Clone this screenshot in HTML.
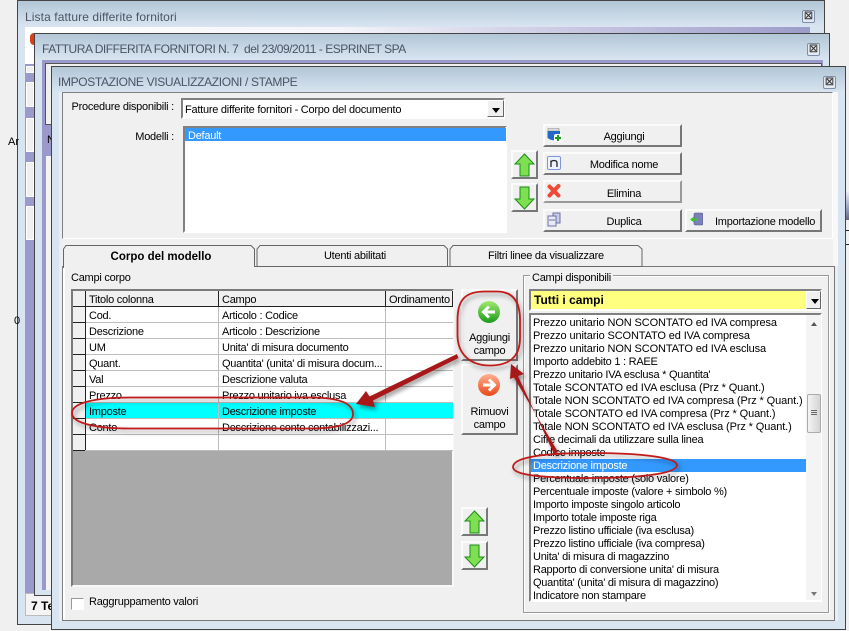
<!DOCTYPE html>
<html><head><meta charset="utf-8">
<style>
html,body{margin:0;padding:0;background:#f0f0f0;width:849px;height:631px;overflow:hidden}
body{position:relative;font:11px/14px "Liberation Sans",sans-serif;color:#000;letter-spacing:-.25px}
div,span,svg{position:absolute;box-sizing:border-box}
.t{white-space:nowrap;line-height:14px;height:14px;margin-top:1px}
.r{margin-top:2px}
.u{letter-spacing:-.12px}
.win{border:1px solid #444;background:#d8e4f0}
.tb{left:0;right:0;top:0;height:26px;background:linear-gradient(#b2c6d6,#d9e5f1)}
.ti{font-size:12px;color:#4a5464;letter-spacing:.1px;margin-top:0}
.x{width:13px;height:13px;border:1px solid #7d8ea8;background:#e4eaf2;border-radius:2px;font:bold 10px/11px "Liberation Sans",sans-serif;text-align:center;color:#333;letter-spacing:0}
.b{background:#f0f0f0;border:2px solid;border-color:#fbfbfb #777 #777 #fbfbfb}
.s{border:2px solid;border-color:#808080 #fff #fff #808080;background:#fff}
.c{text-align:center}
.dd{background:#f0f0f0;border:1px solid;border-color:#fff #666 #666 #fff}
.dd:after{content:"";position:absolute;left:4px;top:7px;border:4px solid transparent;border-top:5px solid #000;border-bottom:0}
.l{background:#bdbdbd}
.d{background:#222}
.k{left:26px;width:8px;background:#f0f0f0;border:1px solid #fff}
</style></head><body>

<!-- window 1 -->
<div class="win" style="left:17px;top:0;width:808px;height:625px">
 <div class="tb"></div>
 <div style="left:7px;top:26px;width:785px;height:7px;background:linear-gradient(90deg,#fff,#f4f4fa 40%,#9c9cca)"></div>
 <div style="left:7px;top:33px;width:10px;height:30px;background:#fff"></div>
 <div style="left:7px;top:63px;width:10px;height:530px;background:#9999cb"></div>
</div>
<div class="k" style="top:66px;height:7px"></div>
<div class="k" style="top:82px;height:25px"></div>
<div class="k" style="top:118px;height:34px"></div>
<div class="k" style="top:162px;height:35px"></div>
<div class="k" style="top:206px;height:34px"></div>
<div class="t ti" style="left:25px;top:10px">Lista fatture differite fornitori</div>
<div class="x" style="left:802px;top:10px">&#9746;</div>
<div style="left:30px;top:33px;width:8px;height:12px;background:#d84018;border-radius:4px"></div>
<div class="t" style="left:8px;top:134px;letter-spacing:0">Ar</div>
<div class="t" style="left:14px;top:313px">0</div>
<div style="left:25px;top:593px;width:30px;height:23px;background:#f4f4f4;border:1px solid #bbb"></div>
<div class="t" style="left:31px;top:598px;font-weight:bold;font-size:12px;letter-spacing:0">7 Te</div>

<!-- window 2 -->
<div class="win" style="left:34px;top:33px;width:796px;height:563px">
 <div class="tb"></div>
 <div style="left:7px;top:26px;width:781px;height:530px;background:#9999cb"></div>
 <div style="left:10px;top:29px;width:777px;height:62px;background:#f0f0f0;border:1px solid #555"></div>
 <div style="left:11px;top:122px;width:6px;height:434px;background:#f4f4f4"></div>
 <div style="left:8px;top:91px;width:9px;height:30px;background:#9999cb"></div>
</div>
<div class="t" style="left:47px;top:132px">N</div>
<div class="t ti" style="left:42px;top:42px;letter-spacing:-.47px">FATTURA DIFFERITA FORNITORI N. 7&nbsp; del 23/09/2011 - ESPRINET SPA</div>
<div class="x" style="left:807px;top:43px">&#9746;</div>

<!-- right fragments -->
<div style="left:846px;top:190px;width:3px;height:30px;background:linear-gradient(#f4f4fa,#8a92b8 70%,#667)"></div>
<div style="left:846px;top:230px;width:3px;height:1px;background:#222"></div>
<div style="left:846px;top:244px;width:3px;height:1px;background:#222"></div>

<!-- window 3 -->
<div class="win" style="left:51px;top:66px;width:795px;height:564px">
 <div class="tb"></div>
</div>
<div class="t ti" style="left:58px;top:75px;letter-spacing:-.35px">IMPOSTAZIONE VISUALIZZAZIONI / STAMPE</div>
<div class="x" style="left:823px;top:76px">&#9746;</div>
<div style="left:59px;top:92px;width:779px;height:529px;background:#e8eef7"></div>
<div style="left:62px;top:92px;width:773px;height:528px;background:#f0f0f0"></div>
<div style="left:833px;top:92px;width:5px;height:174px;background:#f8f8fb"></div>

<!-- top group -->
<div style="left:62px;top:92px;width:771px;height:147px;border:1px solid;border-color:#808080 #fff #fff #808080"></div>
<div class="t" style="right:675px;top:99px">Procedure disponibili :</div>
<div class="s" style="left:181px;top:98px;width:324px;height:21px"></div>
<div class="t" style="left:185px;top:102px">Fatture differite fornitori - Corpo del documento</div>
<div class="dd" style="left:487px;top:100px;width:17px;height:17px"></div>
<div class="t" style="right:675px;top:129px">Modelli :</div>
<div class="s" style="left:183px;top:126px;width:324px;height:107px"></div>
<div style="left:185px;top:128px;width:321px;height:13px;background:#3399ff"></div>
<div class="t" style="left:188px;top:128px;color:#fff">Default</div>

<div class="b" style="left:511px;top:150px;width:27px;height:29px"></div>
<div class="b" style="left:511px;top:183px;width:27px;height:29px"></div>
<svg style="left:514px;top:153px" width="21" height="24" viewBox="0 0 21 24"><path d="M10.500 1L20 11H15V23H6V11H1Z" fill="#7ee050" stroke="#1c8a1c"/></svg>
<svg style="left:514px;top:186px" width="21" height="24" viewBox="0 0 21 24"><path d="M10.500 23L20 13H15V1H6V13H1Z" fill="#7ee050" stroke="#1c8a1c"/></svg>

<div class="b" style="left:543px;top:124px;width:139px;height:23px"></div>
<div class="t c" style="left:543px;top:129px;width:162px">Aggiungi</div>
<div class="b" style="left:543px;top:152px;width:139px;height:23px"></div>
<div class="t c" style="left:543px;top:157px;width:162px">Modifica nome</div>
<div class="b" style="left:543px;top:180px;width:139px;height:23px;border-bottom-color:#999;border-right-color:#999"></div>
<div class="t c" style="left:543px;top:186px;width:162px">Elimina</div>
<div class="b" style="left:543px;top:209px;width:139px;height:23px"></div>
<div class="t c" style="left:543px;top:214px;width:162px">Duplica</div>
<div class="b" style="left:685px;top:209px;width:137px;height:23px"></div>
<div class="t" style="left:715px;top:214px">Importazione modello</div>

<svg style="left:547px;top:127px" width="15" height="15" viewBox="0 0 15 15"><path d="M1 1.500H12V4H1Z" fill="#ddd" stroke="#888" stroke-width=".6"/><path d="M.5 4H13V11Q7 15.500 .5 11Z" fill="#2468c8"/><rect x="7" y="7" width="8" height="8" fill="#fff" rx="2"/><path d="M11 8V14M8 11H14" stroke="#18a018" stroke-width="2"/></svg>
<svg style="left:547px;top:156px" width="14" height="14" viewBox="0 0 14 14"><rect x=".5" y=".5" width="13" height="13" rx="1.500" fill="#eef2fc" stroke="#7f96d8"/><path d="M4 11V4.500M4 6Q5 4.500 7 4.500Q10 4.500 10 7V11" fill="none" stroke="#222" stroke-width="1.300"/></svg>
<svg style="left:547px;top:184px" width="14" height="14" viewBox="0 0 14 14"><path d="M2.500 2.500L11.500 11.500M11.500 2L2.500 11.500" stroke="#ee4a38" stroke-width="4" stroke-linecap="round"/></svg>
<svg style="left:547px;top:212px" width="14" height="15" viewBox="0 0 14 15"><path d="M6 1H13V11H6Z" fill="#c8cce4" stroke="#6c70a8"/><path d="M1 4H9V14H1Z" fill="#e8eaf4" stroke="#6c70a8"/><path d="M2 8H8" stroke="#6c70a8"/></svg>
<svg style="left:690px;top:212px" width="13" height="14" viewBox="0 0 13 14"><rect x="4" y="1" width="9" height="12" rx="1.500" fill="#7c80b8" stroke="#50548c" stroke-width=".6"/><path d="M0 7.500L4 4.500V6.500H8V8.500H4V10.500Z" fill="#3cc820"/></svg>

<!-- tabs -->
<div style="left:62px;top:266px;width:773px;height:355px;border:1px solid;border-color:#777;border-left-color:#808080;box-shadow:inset 2px 0 0 #fff;background:#f0f0f0"></div>
<svg style="left:60px;top:243px" width="590" height="26" viewBox="0 0 590 26">
 <path d="M3.500 25V6L6 2.500H191L194.500 6V24M197 23.500V6L200 2.500H384L387.500 6V23.500M390 23.500V6L393 2.500H578L582 6V23.500" fill="#f0f0f0" stroke="#666"/>
 <path d="M195 23.500H582" stroke="#666"/>
</svg>
<div class="t c" style="left:63px;top:249px;width:196px;font-weight:bold;font-size:11.5px;letter-spacing:0">Corpo del modello</div>
<div class="t c" style="left:257px;top:248px;width:196px">Utenti abilitati</div>
<div class="t c" style="left:450px;top:248px;width:192px">Filtri linee da visualizzare</div>

<!-- table -->
<div class="t" style="left:71px;top:270px">Campi corpo</div>
<div style="left:71px;top:289px;width:383px;height:298px;background:#a9a9a9;border:2px solid;border-color:#7a7a7a #f8f8f8 #f8f8f8 #7a7a7a"></div>
<div style="left:73px;top:291px;width:380px;height:16px;background:#f0f0f0"></div>
<div style="left:73px;top:306px;width:380px;height:145px;background:#fff"></div>
<div style="left:73px;top:307px;width:12px;height:143px;background:#f0f0f0"></div>
<div style="left:85px;top:403px;width:368px;height:15px;background:#00ffff"></div>
<div class="d" style="left:73px;top:306px;width:380px;height:1px"></div>
<div class="l" style="left:85px;top:322px;width:368px;height:1px"></div>
<div class="l" style="left:85px;top:338px;width:368px;height:1px"></div>
<div class="l" style="left:85px;top:354px;width:368px;height:1px"></div>
<div class="l" style="left:85px;top:370px;width:368px;height:1px"></div>
<div class="l" style="left:85px;top:386px;width:368px;height:1px"></div>
<div class="l" style="left:85px;top:402px;width:368px;height:1px"></div>
<div class="l" style="left:85px;top:418px;width:368px;height:1px"></div>
<div class="l" style="left:85px;top:434px;width:368px;height:1px"></div>
<div class="d" style="left:73px;top:322px;width:12px;height:1px"></div>
<div class="d" style="left:73px;top:338px;width:12px;height:1px"></div>
<div class="d" style="left:73px;top:354px;width:12px;height:1px"></div>
<div class="d" style="left:73px;top:370px;width:12px;height:1px"></div>
<div class="d" style="left:73px;top:386px;width:12px;height:1px"></div>
<div class="d" style="left:73px;top:402px;width:12px;height:1px"></div>
<div class="d" style="left:73px;top:418px;width:12px;height:1px"></div>
<div class="d" style="left:73px;top:434px;width:12px;height:1px"></div>
<div class="d" style="left:73px;top:450px;width:12px;height:1px"></div>
<div class="d" style="left:85px;top:291px;width:1px;height:160px"></div>
<div class="d" style="left:218px;top:291px;width:1px;height:16px"></div>
<div class="l" style="left:218px;top:307px;width:1px;height:144px"></div>
<div class="d" style="left:385px;top:291px;width:1px;height:16px"></div>
<div class="l" style="left:385px;top:307px;width:1px;height:144px"></div>
<div class="d" style="left:452px;top:291px;width:1px;height:16px"></div>
<div class="l" style="left:85px;top:450px;width:368px;height:1px"></div>

<div class="t r" style="left:89px;top:291px">Titolo colonna</div>
<div class="t r" style="left:222px;top:291px">Campo</div>
<div class="t r" style="left:389px;top:291px">Ordinamento</div>
<div class="t r" style="left:89px;top:307px">Cod.</div><div class="t r" style="left:222px;top:307px">Articolo : Codice</div>
<div class="t r" style="left:89px;top:323px">Descrizione</div><div class="t r" style="left:222px;top:323px">Articolo : Descrizione</div>
<div class="t r" style="left:89px;top:339px">UM</div><div class="t r" style="left:222px;top:339px">Unita' di misura documento</div>
<div class="t r" style="left:89px;top:355px">Quant.</div><div class="t r" style="left:222px;top:355px">Quantita' (unita' di misura docum...</div>
<div class="t r" style="left:89px;top:371px">Val</div><div class="t r" style="left:222px;top:371px">Descrizione valuta</div>
<div class="t r" style="left:89px;top:387px">Prezzo</div><div class="t r" style="left:222px;top:387px">Prezzo unitario iva esclusa</div>
<div class="t r" style="left:89px;top:403px">Imposte</div><div class="t r" style="left:222px;top:403px">Descrizione imposte</div>
<div class="t r" style="left:89px;top:419px">Conto</div><div class="t r" style="left:222px;top:419px">Descrizione conto contabilizzazi...</div>

<div class="s" style="left:71px;top:598px;width:13px;height:12px;border-width:1px;border-color:#999 #fff #fff #999"></div>
<div class="t" style="left:89px;top:594px">Raggruppamento valori</div>

<!-- middle buttons -->
<div class="b" style="left:461px;top:289px;width:57px;height:72px"></div>
<div class="b" style="left:461px;top:364px;width:57px;height:71px"></div>
<svg style="left:477px;top:300px" width="24" height="24" viewBox="0 0 24 24"><defs><linearGradient id="g" x1="0" y1="0" x2="0" y2="1"><stop offset="0" stop-color="#a0ea70"/><stop offset="1" stop-color="#1c9a1c"/></linearGradient><linearGradient id="o" x1="0" y1="0" x2="0" y2="1"><stop offset="0" stop-color="#ffb090"/><stop offset="1" stop-color="#e84818"/></linearGradient></defs><circle cx="12" cy="12" r="11" fill="url(#g)"/><path d="M18 12H7M12 6.500L6.500 12L12 17.500" fill="none" stroke="#fff" stroke-width="3"/></svg>
<svg style="left:477px;top:373px" width="24" height="24" viewBox="0 0 24 24"><circle cx="12" cy="12" r="11" fill="url(#o)"/><path d="M6 12H17M12 6.500L17.500 12L12 17.500" fill="none" stroke="#fff" stroke-width="3"/></svg>
<div class="t c" style="left:461px;top:330px;width:57px">Aggiungi</div>
<div class="t c" style="left:461px;top:343px;width:57px">campo</div>
<div class="t c" style="left:461px;top:404px;width:57px">Rimuovi</div>
<div class="t c" style="left:461px;top:417px;width:57px">campo</div>

<div class="b" style="left:461px;top:507px;width:27px;height:29px"></div>
<div class="b" style="left:461px;top:541px;width:27px;height:29px"></div>
<svg style="left:464px;top:510px" width="21" height="24" viewBox="0 0 21 24"><path d="M10.500 1L20 11H15V23H6V11H1Z" fill="#7ee050" stroke="#1c8a1c"/></svg>
<svg style="left:464px;top:544px" width="21" height="24" viewBox="0 0 21 24"><path d="M10.500 23L20 13H15V1H6V13H1Z" fill="#7ee050" stroke="#1c8a1c"/></svg>

<!-- right group -->
<div style="left:523px;top:275px;width:306px;height:338px;border:1px solid;border-color:#999;box-shadow:inset 1px 1px 0 #fff,1px 1px 0 #fff"></div>
<div class="t" style="left:530px;top:270px;background:#f0f0f0;padding:0 2px">Campi disponibili</div>
<div class="s" style="left:529px;top:289px;width:293px;height:22px;background:#ffff80"></div>
<div class="t" style="left:534px;top:292px;font-weight:bold;font-size:12px;letter-spacing:0">Tutti i campi</div>
<div class="dd" style="left:806px;top:291px;width:15px;height:18px"></div>
<div class="s" style="left:529px;top:313px;width:293px;height:289px"></div>
<div style="left:531px;top:459px;width:275px;height:13px;background:#3399ff"></div>
<div style="left:806px;top:315px;width:15px;height:285px;background:#f4f4f4"></div>
<div style="left:807px;top:394px;width:14px;height:39px;background:linear-gradient(90deg,#f4f4f4,#d4d4d4);border:1px solid #aaa;border-radius:2px"></div>
<div style="left:811px;top:410px;width:6px;height:1px;background:#666"></div>
<div style="left:811px;top:412px;width:6px;height:1px;background:#666"></div>
<div style="left:811px;top:414px;width:6px;height:1px;background:#666"></div>
<div style="left:811px;top:322px;border:3px solid transparent;border-bottom:4px solid #555;border-top:0"></div>
<div style="left:811px;top:592px;border:3px solid transparent;border-top:4px solid #777;border-bottom:0"></div>

<div class="t u r" style="left:533px;top:314px">Prezzo unitario NON SCONTATO ed IVA compresa</div>
<div class="t u r" style="left:533px;top:327px">Prezzo unitario SCONTATO ed IVA compresa</div>
<div class="t u r" style="left:533px;top:340px">Prezzo unitario NON SCONTATO ed IVA esclusa</div>
<div class="t r" style="left:533px;top:353px">Importo addebito 1 : RAEE</div>
<div class="t r" style="left:533px;top:366px">Prezzo unitario IVA esclusa * Quantita'</div>
<div class="t u r" style="left:533px;top:379px">Totale SCONTATO ed IVA esclusa (Prz * Quant.)</div>
<div class="t u r" style="left:533px;top:392px">Totale NON SCONTATO ed IVA compresa (Prz * Quant.)</div>
<div class="t u r" style="left:533px;top:405px">Totale SCONTATO ed IVA compresa (Prz * Quant.)</div>
<div class="t u r" style="left:533px;top:418px">Totale NON SCONTATO ed IVA esclusa (Prz * Quant.)</div>
<div class="t r" style="left:533px;top:431px">Cifre decimali da utilizzare sulla linea</div>
<div class="t r" style="left:533px;top:444px">Codice imposte</div>
<div class="t r" style="left:533px;top:457px;color:#fff">Descrizione imposte</div>
<div class="t r" style="left:533px;top:470px">Percentuale imposte (solo valore)</div>
<div class="t r" style="left:533px;top:483px">Percentuale imposte (valore + simbolo %)</div>
<div class="t r" style="left:533px;top:496px">Importo imposte singolo articolo</div>
<div class="t r" style="left:533px;top:509px">Importo totale imposte riga</div>
<div class="t r" style="left:533px;top:522px">Prezzo listino ufficiale (iva esclusa)</div>
<div class="t r" style="left:533px;top:535px">Prezzo listino ufficiale (iva compresa)</div>
<div class="t r" style="left:533px;top:548px">Unita' di misura di magazzino</div>
<div class="t r" style="left:533px;top:561px">Rapporto di conversione unita' di misura</div>
<div class="t r" style="left:533px;top:574px">Quantita' (unita' di misura di magazzino)</div>
<div class="t r" style="left:533px;top:587px">Indicatore non stampare</div>

<!-- annotations -->
<svg style="left:0;top:0;filter:drop-shadow(2px 3px 2px rgba(0,0,0,.4))" width="849" height="631" viewBox="0 0 849 631">
 <g fill="none" stroke="#c01a1a" stroke-width="1.800">
  <path d="M72 413C72 403 95 397.500 130 397.500H310C338 397.500 353 403 353 414C353 424 338 428.500 310 428.500H130C95 428.500 72 423 72 413Z"/>
  <path d="M457.500 320C457.500 300 465 291.500 485 291.500H497C513 291.500 520 302 520 320V338C520 356 510 365.500 490 365.500C468 365.500 457.500 352 457.500 335Z"/>
  <path d="M513 467C513 458 540 453 590 453C645 453 677 458 677 465C677 473 645 478 590 478C540 478 513 475 513 467Z"/>
 </g>
 <g fill="#a81818" stroke="none">
  <path d="M457 354L458.500 358L373 400.500L375 407L356 404L366 391L369.500 396.500Z"/>
  <path d="M558 452L554 454L518 376L524 374L511 364L510 379L514 377.500Z"/>
 </g>
</svg>
</body></html>
